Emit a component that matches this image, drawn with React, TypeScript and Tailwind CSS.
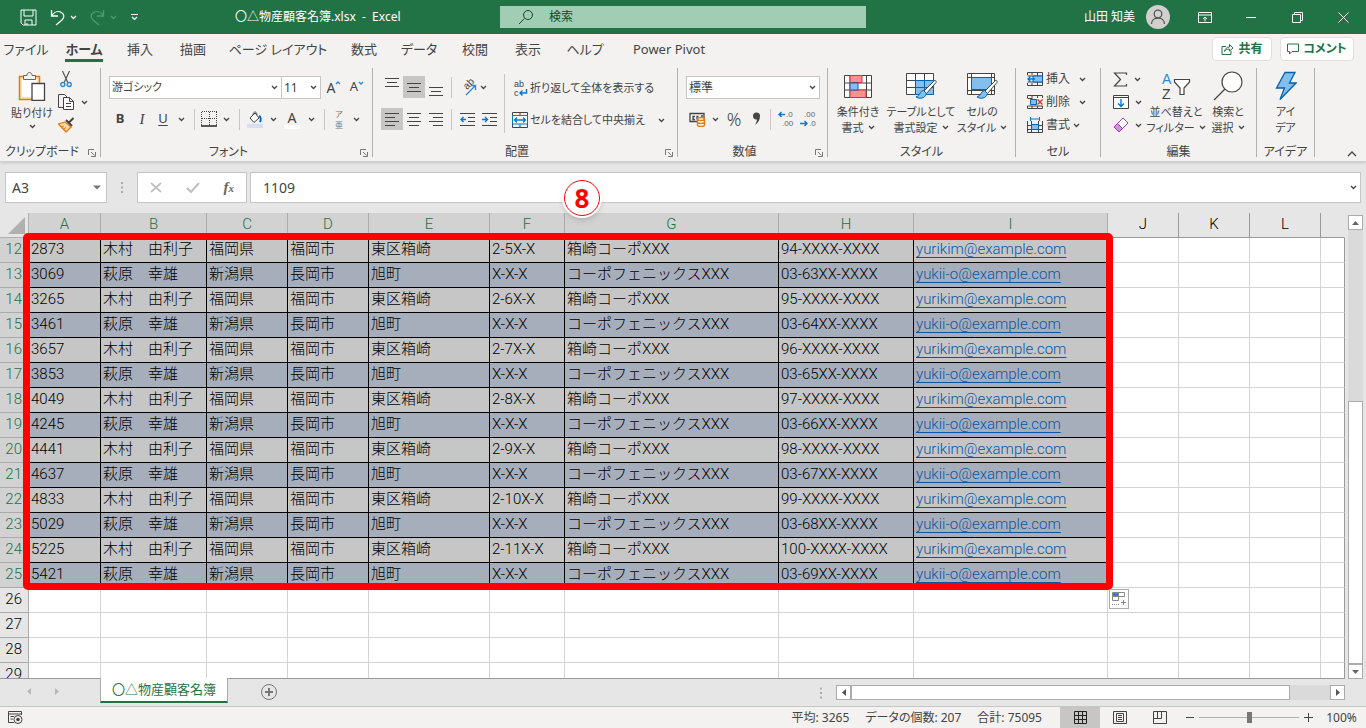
import React from 'react';

import clsx from 'clsx';

// column letters with their widths, the last one takes what is left
const COLUMNS = [
  { name: 'A', width: 'w-[72px]' },
  { name: 'B', width: 'w-[106px]' },
  { name: 'C', width: 'w-[81px]' },
  { name: 'D', width: 'w-[81px]' },
  { name: 'E', width: 'w-[121px]' },
  { name: 'F', width: 'w-[75px]' },
  { name: 'G', width: 'w-[214px]' },
  { name: 'H', width: 'w-[135px]' },
  { name: 'I', width: 'w-[194px]' },
  { name: 'J', width: 'w-[71px]' },
  { name: 'K', width: 'w-[71px]' },
  { name: 'L', width: 'w-[71px]' },
  { name: '', width: '' },
];

const KIMURA = ['木村　由利子', '福岡県', '福岡市', '東区箱崎'];
const OGIWARA = ['萩原　幸雄', '新潟県', '長岡市', '旭町'];

const customers = [
  { row: 12, id: '2873', block: '2-5X-X', tel: '94-XXXX-XXXX' },
  { row: 13, id: '3069', block: 'X-X-X', tel: '03-63XX-XXXX' },
  { row: 14, id: '3265', block: '2-6X-X', tel: '95-XXXX-XXXX' },
  { row: 15, id: '3461', block: 'X-X-X', tel: '03-64XX-XXXX' },
  { row: 16, id: '3657', block: '2-7X-X', tel: '96-XXXX-XXXX' },
  { row: 17, id: '3853', block: 'X-X-X', tel: '03-65XX-XXXX' },
  { row: 18, id: '4049', block: '2-8X-X', tel: '97-XXXX-XXXX' },
  { row: 19, id: '4245', block: 'X-X-X', tel: '03-66XX-XXXX' },
  { row: 20, id: '4441', block: '2-9X-X', tel: '98-XXXX-XXXX' },
  { row: 21, id: '4637', block: 'X-X-X', tel: '03-67XX-XXXX' },
  { row: 22, id: '4833', block: '2-10X-X', tel: '99-XXXX-XXXX' },
  { row: 23, id: '5029', block: 'X-X-X', tel: '03-68XX-XXXX' },
  { row: 24, id: '5225', block: '2-11X-X', tel: '100-XXXX-XXXX' },
  { row: 25, id: '5421', block: 'X-X-X', tel: '03-69XX-XXXX' },
];

const emptyRows = [26, 27, 28, 29];

const TABS = [
  { label: 'ファイル', width: 'w-[52px]' },
  { label: 'ホーム', width: 'w-[64px]' },
  { label: '挿入', width: 'w-[48px]' },
  { label: '描画', width: 'w-[58px]' },
  { label: 'ページ レイアウト', width: 'w-[112px]' },
  { label: '数式', width: 'w-[60px]' },
  { label: 'データ', width: 'w-[50px]' },
  { label: '校閲', width: 'w-[62px]' },
  { label: '表示', width: 'w-[44px]' },
  { label: 'ヘルプ', width: 'w-[70px]' },
  { label: 'Power Pivot', width: 'w-[98px]' },
];

type SvgProps = {
  w: number;
  h: number;
  className?: string;
  children: React.ReactNode;
};

const Svg = ({ w, h, className, children }: SvgProps) => (
  <svg
    width={w}
    height={h}
    viewBox={`0 0 ${w} ${h}`}
    fill="none"
    stroke="currentColor"
    className={clsx('shrink-0', className)}
    aria-hidden="true"
  >
    {children}
  </svg>
);

const Chevron = ({ className }: { className?: string }) => (
  <Svg w={7} h={5} className={className}>
    <path d="M1 1l2.5 2.5L6 1" strokeWidth="1.3" />
  </Svg>
);

const Lines = ({ rows, w = 14, h = 14 }: { rows: number[][]; w?: number; h?: number }) => (
  <Svg w={w} h={h}>
    {rows.map(([x1, x2, y]) => (
      <path key={y} d={`M${x1} ${y + 0.5}H${x2}`} />
    ))}
  </Svg>
);

type ToolProps = {
  label: string;
  width: string;
  active?: boolean;
  className?: string;
  children: React.ReactNode;
};

const Tool = ({ label, width, active, className, children }: ToolProps) => (
  <button
    type="button"
    aria-label={label}
    className={clsx(
      'flex h-[22px] shrink-0 items-center justify-center',
      width,
      active && 'bg-[#c8c6c4]',
      className
    )}
  >
    {children}
  </button>
);

const Divider = ({ className }: { className?: string }) => (
  <div className={clsx('h-[21px] w-px shrink-0 bg-[#c8c6c4]', className)} />
);

type GroupProps = {
  label: string;
  width: string;
  launcher?: boolean;
  children: React.ReactNode;
};

const Group = ({ label, width, launcher, children }: GroupProps) => (
  <section
    aria-label={label}
    className={clsx('flex h-[89px] shrink-0 flex-col border-r border-[#b3b0ad]', width)}
  >
    <div className="flex h-[79px] items-start">{children}</div>
    <div
      className={clsx(
        'relative flex h-[10px] items-center justify-center text-[12px] leading-none whitespace-nowrap',
        launcher && 'pr-4'
      )}
    >
      {label}
      {launcher && (
        <button type="button" aria-label={`${label}の設定`} className="absolute right-1 bottom-0">
          <Svg w={8} h={8} className="text-[#777]">
            <path d="M.5 6V.5H6M3 3l3.5 3.5M7.5 3v4.5H3" />
          </Svg>
        </button>
      )}
    </div>
  </section>
);

type BigButtonProps = {
  lines: [string, string];
  width: string;
  chevron?: boolean;
  children: React.ReactNode;
};

const BigButton = ({ lines, width, chevron = true, children }: BigButtonProps) => (
  <button type="button" className={clsx('flex shrink-0 flex-col items-center', width)}>
    <span className="flex h-9 items-center">{children}</span>
    <span className="text-[11px] leading-[16px] whitespace-nowrap">{lines[0]}</span>
    <span className="flex items-center gap-1 text-[11px] leading-[15px] whitespace-nowrap">
      {lines[1]}
      {chevron && <Chevron />}
    </span>
  </button>
);

const Brush = () => (
  <>
    <path d="M29.5 8.5L19 19l2.5 2.5L31 10.500c.5-1.500-.5-2.500-1.500-2z" fill="#fff" stroke="#444" />
    <path
      d="M18.500 18.500c-4 .5-3 5-7.500 6.500 3 2 9 2 10.500-3.500z"
      fill="#83beec"
      stroke="#0063b1"
    />
  </>
);

function TitleBar() {
  return (
    <header className="flex h-[34px] shrink-0 items-center bg-[#217346] text-[12px] text-white">
      <div className="flex w-[500px] shrink-0 items-center">
        <button type="button" aria-label="上書き保存" className="ml-5">
          <Svg w={17} h={17}>
            <path d="M1 1h15v15H3l-2-2zM4 1v6h9V1M5 16v-5h7v5M7 16v-2" />
          </Svg>
        </button>
        <button type="button" aria-label="元に戻す" className="ml-3 flex items-center gap-1">
          <Svg w={17} h={17}>
            <path d="M2.500 1v6H9M2.500 7C5 3 9 1.500 12.500 3.500c3 2 3 5 .5 7.500l-6 5" strokeWidth="1.300" />
          </Svg>
          <Chevron />
        </button>
        <button
          type="button"
          aria-label="やり直し"
          className="ml-3 flex items-center gap-1 text-[#4f9a70]"
        >
          <Svg w={17} h={17}>
            <path d="M14.500 1v6H8M14.500 7C12 3 8 1.500 4.500 3.500c-3 2-3 5-.5 7.500l6 5" strokeWidth="1.300" />
          </Svg>
          <Chevron />
        </button>
        <button type="button" aria-label="クイック アクセス" className="ml-[13px]">
          <Svg w={9} h={8}>
            <path d="M1 1.500h7M2 4l2.500 2.500L7 4" strokeWidth="1.200" />
          </Svg>
        </button>
        <h1 className="ml-24 whitespace-pre">〇△物産顧客名簿.xlsx  -  Excel</h1>
      </div>
      <label className="flex h-[22px] w-[366px] items-center bg-[#a0cdb4] pl-[18px] text-[#0b5028]">
        <Svg w={16} h={16}>
          <circle cx="10" cy="6" r="4.500" />
          <path d="M6.500 9.500L1 15" />
        </Svg>
        <input
          type="text"
          aria-label="検索"
          placeholder="検索"
          className="ml-[15px] w-full bg-transparent outline-none placeholder:text-[#0b5028]"
        />
      </label>
      <div className="ml-auto flex items-center">
        <span>山田 知美</span>
        <svg width="24" height="24" viewBox="0 0 24 24" fill="none" className="mr-3 ml-[11px]">
          <circle cx="12" cy="12" r="12" fill="#d2d0ce" />
          <circle cx="12" cy="9" r="3.800" stroke="#555" strokeWidth="1.300" />
          <path d="M5.500 19c0-8 13-8 13 0" stroke="#555" strokeWidth="1.300" />
        </svg>
        <button type="button" aria-label="リボンの表示オプション" className="flex w-[46px] justify-center">
          <Svg w={14} h={11}>
            <path d="M.5.5h13v10H.5zM.5 3h13M7 9.500V5M5 7l2-2 2 2" />
          </Svg>
        </button>
        <button type="button" aria-label="最小化" className="flex w-[46px] justify-center">
          <Svg w={10} h={11}>
            <path d="M0 5.500h10" />
          </Svg>
        </button>
        <button type="button" aria-label="元のサイズ" className="flex w-[46px] justify-center">
          <Svg w={11} h={11}>
            <path d="M.5 2.500h8v8h-8zM2.500 2.500v-2h8v8h-2" />
          </Svg>
        </button>
        <button type="button" aria-label="閉じる" className="flex w-[46px] justify-center">
          <Svg w={11} h={11}>
            <path d="M.5.5l10 10M10.500.5l-10 10" />
          </Svg>
        </button>
      </div>
    </header>
  );
}

function TabBar() {
  return (
    <nav className="flex h-[30px] shrink-0 items-center text-[13px]">
      {TABS.map((tab) => (
        <button
          key={tab.label}
          type="button"
          className={clsx('flex h-full justify-center whitespace-nowrap', tab.width)}
        >
          <span
            className={clsx(
              'h-[28px] leading-[30px]',
              tab.label === 'ホーム' && 'border-b-[3px] border-[#217346] font-bold'
            )}
          >
            {tab.label}
          </span>
        </button>
      ))}
      <div className="mr-3 ml-auto flex gap-2 text-[12px] font-bold text-[#217346]">
        <button
          type="button"
          className="flex h-6 w-[60px] items-center justify-center gap-1 rounded-sm border border-[#e1dfdd] bg-white"
        >
          <Svg w={13} h={12}>
            <path d="M5 3.500H1v8h9V8M3.500 8.500c.5-3 2.500-4.500 5-4.500V1.500L12 5 8.500 8V6c-2 0-3.500.5-5 2.500z" />
          </Svg>
          共有
        </button>
        <button
          type="button"
          className="flex h-6 w-[74px] items-center justify-center gap-1 rounded-sm border border-[#e1dfdd] bg-white"
        >
          <Svg w={12} h={12}>
            <path d="M.5 1h11v7.500H5L2.500 11V8.500h-2z" />
          </Svg>
          コメント
        </button>
      </div>
    </nav>
  );
}

function ClipboardGroup() {
  return (
    <Group label="クリップボード" width="w-[101px]" launcher>
      <button type="button" className="ml-2 flex w-12 flex-col items-center pt-[3px] text-[11px]">
        <Svg w={28} h={30}>
          <path d="M1.500 5.500h20v23h-20z" fill="#fde2a8" stroke="#e07b10" strokeWidth="1.500" />
          <path d="M4 8h15v18H4z" fill="#fff" stroke="none" />
          <path d="M5.500 8.500v-4h3.500c0-4 5-4 5 0h3.500v4z" fill="#f3f2f1" stroke="#666" />
          <path d="M14 12.500h12.500v17H14z" fill="#fff" stroke="#444" strokeWidth="1.300" />
        </Svg>
        <span className="mt-1 leading-[15px] whitespace-nowrap">貼り付け</span>
        <Chevron className="mt-1" />
      </button>
      <div className="ml-[2px] flex flex-col gap-px">
        <Tool label="切り取り" width="w-4">
          <Svg w={12} h={17}>
            <path d="M2.500 0l5.500 12M9.500 0L4 12" stroke="#555" strokeWidth="1.200" />
            <circle cx="2.800" cy="13.500" r="2" stroke="#2b88d8" strokeWidth="1.400" />
            <circle cx="9.200" cy="13.500" r="2" stroke="#2b88d8" strokeWidth="1.400" />
          </Svg>
        </Tool>
        <Tool label="コピー" width="w-[30px]" className="gap-[6px]">
          <Svg w={17} h={17}>
            <path d="M5.500 13.500h-5V.5h6l3 3" />
            <path d="M5.500 3.500h6l4 4v8h-10zM11.500 3.500v4h4M8 9.500h5M8 12.500h5" fill="#fff" />
          </Svg>
          <Chevron />
        </Tool>
        <Tool label="書式のコピー" width="w-4">
          <Svg w={17} h={16}>
            <path d="M15.500 1l-4.500 4.500M8 3l6 6" strokeWidth="2" />
            <path d="M7 5L.5 7 8 15l5-5z" fill="#fbd9a8" stroke="#e07b10" strokeWidth="1.300" />
            <path d="M3 10l3-1M5 12.500l3-2" stroke="#e07b10" />
          </Svg>
        </Tool>
      </div>
    </Group>
  );
}

function FontGroup() {
  return (
    <Group label="フォント" width="w-[272px]" launcher>
      <div className="pl-2">
        <div className="flex pt-2">
          <div className="relative flex items-center">
            <select
              aria-label="フォント名"
              className="h-[23px] w-[173px] appearance-none border border-[#c8c6c4] bg-white pl-[2px] text-[11px]"
            >
              <option>游ゴシック</option>
            </select>
            <Chevron className="pointer-events-none absolute right-1" />
          </div>
          <div className="relative -ml-px flex items-center">
            <select
              aria-label="フォント サイズ"
              className="h-[23px] w-[40px] appearance-none border border-[#c8c6c4] bg-white pl-[2px] text-[12px]"
            >
              <option>11</option>
            </select>
            <Chevron className="pointer-events-none absolute right-1" />
          </div>
          <Tool label="フォント サイズの拡大" width="w-[26px]">
            <span className="text-[14px]">A</span>
            <Svg w={6} h={14} className="text-[#2b88d8]">
              <path d="M1 4l2-2 2 2" strokeWidth="1.300" />
            </Svg>
          </Tool>
          <Tool label="フォント サイズの縮小" width="w-[20px]">
            <span className="text-[13px]">A</span>
            <Svg w={6} h={14} className="text-[#2b88d8]">
              <path d="M1 2l2 2 2-2" strokeWidth="1.300" />
            </Svg>
          </Tool>
        </div>
        <div className="flex items-center pt-[9px]">
          <Tool label="太字" width="w-[22px]">
            <span className="text-[13px] font-bold">B</span>
          </Tool>
          <Tool label="斜体" width="w-[22px]">
            <span className="font-['Liberation_Serif',serif] text-[15px] italic">I</span>
          </Tool>
          <Tool label="下線" width="w-[20px]">
            <span className="text-[13px] underline underline-offset-2">U</span>
          </Tool>
          <Tool label="下線の種類" width="w-4">
            <Chevron />
          </Tool>
          <Divider className="mx-[5px]" />
          <Tool label="罫線" width="w-[18px]">
            <Svg w={16} h={16}>
              <path d="M1 .5h15M.5 1v14M15.500 1v14M8.500 1v14M1 7.500h15" strokeDasharray="1 1" />
              <path d="M0 15h16" stroke="#222" strokeWidth="1.500" />
            </Svg>
          </Tool>
          <Tool label="罫線の種類" width="w-4">
            <Chevron />
          </Tool>
          <Divider className="mx-[5px]" />
          <Tool label="塗りつぶしの色" width="w-[20px]">
            <Svg w={16} h={17}>
              <path d="M3 7l5-5 4 5-5 4.500zM6 4c0-4 4-4 4 0" fill="#fff" />
              <path d="M12 5c2 1 2 4 1 6" stroke="#0063b1" strokeWidth="2" />
              <path d="M0 15h16" stroke="#d6dff0" strokeWidth="4" />
            </Svg>
          </Tool>
          <Tool label="塗りつぶしの色を選ぶ" width="w-4">
            <Chevron />
          </Tool>
          <Tool label="フォントの色" width="w-[22px]">
            <span className="border-b-4 border-white px-1 text-[14px] leading-[15px]">A</span>
          </Tool>
          <Tool label="フォントの色を選ぶ" width="w-4">
            <Chevron />
          </Tool>
          <Divider className="mx-[5px]" />
          <Tool label="ふりがな" width="w-[18px]" className="flex-col text-[#777]">
            <span className="text-[8px] leading-[11px]">ア</span>
            <span className="text-[8px] leading-[11px]">亜</span>
          </Tool>
          <Tool label="ふりがなの設定" width="w-4">
            <Chevron />
          </Tool>
        </div>
      </div>
    </Group>
  );
}

function AlignmentGroup() {
  return (
    <Group label="配置" width="w-[305px]" launcher>
      <div className="pl-2">
        <div className="flex items-center pt-2">
          <Tool label="上揃え" width="w-[22px]">
            <Lines rows={[[0, 14, 0], [2, 12, 4], [0, 14, 8]]} h={18} />
          </Tool>
          <Tool label="上下中央揃え" width="w-[22px]" active>
            <Lines rows={[[0, 14, 3], [2, 12, 7], [0, 14, 11]]} />
          </Tool>
          <Tool label="下揃え" width="w-[22px]">
            <Lines rows={[[0, 14, 9], [2, 12, 13], [0, 14, 17]]} h={18} />
          </Tool>
          <Divider className="mx-1" />
          <Tool label="方向" width="w-[32px]" className="gap-[2px]">
            <Svg w={20} h={20} className="font-['Liberation_Sans',sans-serif]">
              <text fontSize="10" fill="currentColor" stroke="none" transform="translate(9 13) rotate(-45)">
                ab
              </text>
              <path d="M8 18L17 9M13 8.500h4.500V13" stroke="#2b88d8" strokeWidth="1.300" />
            </Svg>
            <Chevron />
          </Tool>
        </div>
        <div className="flex items-center pt-[10px]">
          <Tool label="左揃え" width="w-[22px]" active>
            <Lines rows={[[0, 14, 1], [0, 10, 5], [0, 14, 9], [0, 10, 13]]} />
          </Tool>
          <Tool label="中央揃え" width="w-[22px]">
            <Lines rows={[[0, 14, 1], [2, 12, 5], [0, 14, 9], [2, 12, 13]]} />
          </Tool>
          <Tool label="右揃え" width="w-[22px]">
            <Lines rows={[[0, 14, 1], [4, 14, 5], [0, 14, 9], [4, 14, 13]]} />
          </Tool>
          <Divider className="mx-1" />
          <Tool label="インデントを減らす" width="w-[22px]">
            <Svg w={15} h={14}>
              <path d="M0 1.500h15M8 5.500h7M8 9.500h7M0 13.500h15" />
              <path d="M6 7.500H1M3.500 5L1 7.500 3.500 10" stroke="#0078d4" strokeWidth="1.400" />
            </Svg>
          </Tool>
          <Tool label="インデントを増やす" width="w-[22px]">
            <Svg w={15} h={14}>
              <path d="M0 1.500h15M8 5.500h7M8 9.500h7M0 13.500h15" />
              <path d="M0 7.500h5.500M3 5l2.500 2.500L3 10" stroke="#0078d4" strokeWidth="1.400" />
            </Svg>
          </Tool>
        </div>
      </div>
      <div className="mt-[6px] ml-1 h-[59px] w-px bg-[#c8c6c4]" />
      <div className="pl-[7px] text-[11px]">
        <button type="button" className="mt-[9px] flex h-[22px] items-center gap-[2px] whitespace-nowrap">
          <Svg w={16} h={20} className="font-['Liberation_Sans',sans-serif]">
            <text x="2" y="9" fontSize="9" fill="currentColor" stroke="none">
              ab
            </text>
            <text x="2" y="18" fontSize="9" fill="currentColor" stroke="none">
              c
            </text>
            <path d="M14.500 11v4H8M10.500 12.500L8 15l2.500 2.500" stroke="#0078d4" strokeWidth="1.400" />
          </Svg>
          折り返して全体を表示する
        </button>
        <div className="mt-[10px] flex h-[22px] w-[153px] items-center justify-between">
          <button type="button" className="flex items-center gap-[2px] whitespace-nowrap">
            <Svg w={16} h={16}>
              <path d="M.5.5h15v15H.5zM8 .5v3M8 12v3.500" />
              <path d="M.5 3.500h15v8.500H.5z" fill="#fff" stroke="#0078d4" />
              <path d="M2.500 8h11M5 5.500L2.500 8 5 10.500M11 5.500L13.500 8 11 10.500" stroke="#0078d4" strokeWidth="1.300" />
            </Svg>
            セルを結合して中央揃え
          </button>
          <button type="button" aria-label="結合の種類">
            <Chevron />
          </button>
        </div>
      </div>
    </Group>
  );
}

function NumberGroup() {
  return (
    <Group label="数値" width="w-[150px]" launcher>
      <div className="pl-2">
        <div className="relative flex w-[134px] items-center pt-2">
          <select
            aria-label="表示形式"
            className="h-[23px] w-full appearance-none border border-[#c8c6c4] bg-white pl-[2px] text-[12px]"
          >
            <option>標準</option>
          </select>
          <Chevron className="pointer-events-none absolute right-1" />
        </div>
        <div className="flex items-center pt-[9px]">
          <Tool label="通貨表示形式" width="w-[36px]" className="gap-[6px]">
            <Svg w={17} h={16}>
              <path d="M1 2.500h14v8H1zM6 5.500H4v3h2M9.500 5.500H8v3M12 5h2" strokeWidth="1.300" />
              <path
                d="M8.500 8v6c0 2 7 2 7 0V8c0-2-7-2-7 0c0 2 7 2 7 0M8.500 11c0 2 7 2 7 0"
                fill="#fff"
                stroke="#e07b10"
                strokeWidth="1.400"
              />
            </Svg>
            <Chevron />
          </Tool>
          <Tool label="パーセント" width="w-[24px]">
            <span className="text-[18px] leading-none font-light">%</span>
          </Tool>
          <Tool label="桁区切り" width="w-[20px]">
            <Svg w={9} h={14}>
              <path d="M1 4a3.500 3.500 0 0 1 7 0c0 4-2 7-5 9 1-2 2-4 2-5.500C3 8 1 6.500 1 4z" fill="currentColor" stroke="none" />
            </Svg>
          </Tool>
          <Divider className="mr-[5px] ml-1" />
          <Tool label="小数点以下の表示桁数を増やす" width="w-[22px]">
            <Svg w={18} h={20} className="font-['Liberation_Sans',sans-serif]">
              <path d="M7 5.500H1M3.500 3L1 5.500 3.500 8" stroke="#0078d4" strokeWidth="1.400" />
              <text x="8" y="8" fontSize="8" fill="#666" stroke="none">
                .0
              </text>
              <text x="4" y="17" fontSize="8" fill="#666" stroke="none">
                .00
              </text>
            </Svg>
          </Tool>
          <Tool label="小数点以下の表示桁数を減らす" width="w-[22px]">
            <Svg w={18} h={20} className="font-['Liberation_Sans',sans-serif]">
              <text x="4" y="8" fontSize="8" fill="#666" stroke="none">
                .00
              </text>
              <path d="M0 14.500h7M4.500 12L7 14.500 4.500 17" stroke="#0078d4" strokeWidth="1.400" />
              <text x="9" y="17" fontSize="8" fill="#666" stroke="none">
                .0
              </text>
            </Svg>
          </Tool>
        </div>
      </div>
    </Group>
  );
}

function StylesGroup() {
  return (
    <Group label="スタイル" width="w-[188px]">
      <BigButton lines={['条件付き', '書式']} width="w-[60px]">
        <Svg w={28} h={23}>
          <path d="M.5.5h27v22H.5zM.5 8h27M.5 15h27M6 .5v22M22.500 .5v22" fill="#fff" />
          <path d="M6 .5h12v7H6zM6 15h16v7.500H6z" fill="#ff9090" stroke="#d13438" />
          <path d="M6 8h8v7H6z" fill="#83beec" stroke="#0063b1" />
        </Svg>
      </BigButton>
      <BigButton lines={['テーブルとして', '書式設定']} width="w-[66px]">
        <Svg w={32} h={28}>
          <path d="M1.500 1.500h27v21h-27zM1.500 8.500h27M1.500 15.500h27M10.500 1.500v21M19.500 1.500v21" fill="#fff" />
          <path d="M10.500 8.500h18v14h-18z" fill="#83beec" stroke="#0063b1" />
          <path d="M10.500 15.500h18M19.500 8.500v14" stroke="#0063b1" />
          <Brush />
        </Svg>
      </BigButton>
      <BigButton lines={['セルの', 'スタイル']} width="w-[56px]">
        <Svg w={32} h={28}>
          <path d="M1.500 1.500h27v21h-27zM1.500 5.500h27M1.500 18.500h27M5.500 1.500v21M25.500 1.500v21" fill="#fff" />
          <path d="M5.500 5.500h20v12h-20z" fill="#83beec" stroke="#0063b1" />
          <Brush />
        </Svg>
      </BigButton>
    </Group>
  );
}

function CellsGroup() {
  return (
    <Group label="セル" width="w-[85px]">
      <div className="flex flex-col gap-px pl-[11px] text-[12px]">
        <button type="button" className="flex h-[22px] items-center gap-[3px]">
          <Svg w={16} h={15}>
            <path d="M.5 3V.5h15v13H.5V11M.5 4h15M.5 10h15M5 .5V3M10.500 .5v13M5 11v2.500" />
            <path d="M6 4h9.500v6H6z" fill="#83beec" stroke="#0063b1" />
            <path d="M8 7H1M3.500 4.500L1 7l2.500 2.500" stroke="#0078d4" strokeWidth="1.400" />
          </Svg>
          挿入
          <Chevron className="ml-[6px]" />
        </button>
        <button type="button" className="flex h-[22px] items-center gap-[3px]">
          <Svg w={16} h={15}>
            <path d="M.5 3V.5h15V3M.5 3.500H5M.5 11h15v2.500H.5V11M5 .5V4M10.500 .5V3M5 11v2.500M10.500 11v2.500" />
            <path d="M3.500 4.500h6v5h-6z" fill="#83beec" stroke="#0063b1" />
            <path d="M10.500 4.500l5 5M15.500 4.500l-5 5" stroke="#e03c31" strokeWidth="1.500" />
          </Svg>
          削除
          <Chevron className="ml-[6px]" />
        </button>
        <button type="button" className="flex h-[22px] items-center gap-[3px]">
          <Svg w={16} h={17}>
            <path d="M.5 4v11.500h15V4M.5 8.500h15M.5 12.500h15M4.500 4v11.500M11.500 4v11.500" />
            <path d="M4.500 7.500h7v5h-7z" fill="#83beec" stroke="#0063b1" />
            <path d="M3.500 0v4M12.500 0v4M3.500 2h9" stroke="#0078d4" />
          </Svg>
          書式
          <Chevron />
        </button>
      </div>
    </Group>
  );
}

function EditingGroup() {
  return (
    <Group label="編集" width="w-[156px]">
      <div className="flex flex-col gap-px pl-[11px]">
        <Tool label="オート SUM" width="w-[30px]" className="gap-[6px]">
          <Svg w={15} h={15}>
            <path d="M13.500 3V1H1.500l6 6.500-6 6.500h12v-2" strokeWidth="1.200" />
          </Svg>
          <Chevron />
        </Tool>
        <Tool label="フィル" width="w-[30px]" className="gap-[6px]">
          <Svg w={16} h={14}>
            <path d="M.5.5h15v13H.5zM.5 2.500h15" fill="#fff" />
            <path d="M8 4v7.500M5 8.500l3 3 3-3" stroke="#0078d4" strokeWidth="1.400" />
          </Svg>
          <Chevron />
        </Tool>
        <Tool label="クリア" width="w-[30px]" className="gap-[6px]">
          <Svg w={16} h={16}>
            <path d="M10 1l5 5-9 9-5-5z" fill="#fff" stroke="#9a3fa8" />
            <path d="M4.500 6.500l5 5L6 15l-5-5z" fill="#d58fe0" stroke="#9a3fa8" />
          </Svg>
          <Chevron />
        </Tool>
      </div>
      <BigButton lines={['並べ替えと', 'フィルター']} width="w-[68px]">
        <Svg w={30} h={32} className="font-['Liberation_Sans',sans-serif]">
          <text x="1" y="14" fontSize="14" fill="#2b88d8" stroke="none">
            A
          </text>
          <text x="1" y="29" fontSize="14" fill="currentColor" stroke="none">
            Z
          </text>
          <path d="M13.500 9.500h15V12l-5.500 6v6.500h-4V18L13.500 12z" fill="#fff" strokeWidth="1.200" />
        </Svg>
      </BigButton>
      <BigButton lines={['検索と', '選択']} width="w-[36px]">
        <Svg w={30} h={30}>
          <circle cx="19" cy="11" r="10" fill="#fff" strokeWidth="1.200" />
          <path d="M12 18L1 29" strokeWidth="1.200" />
        </Svg>
      </BigButton>
    </Group>
  );
}

function IdeasGroup() {
  return (
    <Group label="アイデア" width="w-[58px]">
      <BigButton lines={['アイ', 'デア']} width="w-[57px]" chevron={false}>
        <Svg w={22} h={30}>
          <path
            d="M10 1.500h10L14.500 12H21L5 28.500 9.500 17H1.500z"
            fill="#83beec"
            stroke="#0063b1"
            strokeWidth="1.300"
          />
        </Svg>
      </BigButton>
    </Group>
  );
}

function FormulaBar() {
  return (
    <div className="flex h-[48px] shrink-0 items-start pt-[7px] pr-[5px] pl-[5px]">
      <div className="relative flex items-center">
        <input
          aria-label="名前ボックス"
          defaultValue="A3"
          className="h-[31px] w-[102px] border border-[#c6c6c6] bg-white pl-[6px] text-[14px] text-[#444]"
        />
        <Svg w={8} h={5} className="pointer-events-none absolute right-[6px]">
          <path d="M0 .5h8L4 4.500z" fill="#777" stroke="none" />
        </Svg>
      </div>
      <Svg w={30} h={31}>
        <path d="M15 10v11" stroke="#aaa" strokeWidth="2" strokeDasharray="2 2.500" />
      </Svg>
      <div className="flex h-[31px] w-[110px] items-center justify-around border border-[#c6c6c6] bg-white">
        <button type="button" aria-label="キャンセル">
          <Svg w={12} h={11} className="text-[#c0c0c0]">
            <path d="M1 1l10 9M11 1L1 10" strokeWidth="1.700" />
          </Svg>
        </button>
        <button type="button" aria-label="入力">
          <Svg w={14} h={11} className="text-[#c0c0c0]">
            <path d="M1 6l4 4 8-9" strokeWidth="2" />
          </Svg>
        </button>
        <button
          type="button"
          aria-label="関数の挿入"
          className="font-['Liberation_Serif',serif] text-[15px] leading-none font-bold text-[#666] italic"
        >
          f<span className="text-[11px]">x</span>
        </button>
      </div>
      <div className="relative ml-[3px] flex flex-1 items-center">
        <input
          aria-label="数式バー"
          defaultValue="1109"
          className="h-[31px] w-full border border-[#c6c6c6] bg-white pl-3 text-[14px] text-[#444]"
        />
        <Chevron className="absolute right-1" />
      </div>
    </div>
  );
}

const rowHeaderBase = 'border-r border-b p-0 pr-[6px] pb-[2px] text-right align-middle font-light';

function Sheet() {
  return (
    <table className="w-full table-fixed border-separate border-spacing-0 font-[Roboto,'Noto_Sans_CJK_JP',sans-serif] text-[15px] leading-[20px] font-light whitespace-nowrap text-black [font-feature-settings:normal]">
      <colgroup>
        <col className="w-[29px]" />
        {COLUMNS.map((col) => (
          <col key={col.name} className={col.width} />
        ))}
      </colgroup>
      <thead>
        <tr className="h-[25px]">
          <th className="border-r border-b border-[#b0b0b0] bg-[#e6e6e6] p-0">
            <Svg w={28} h={24}>
              <path d="M25 4v17H8z" fill="#b0b0b0" stroke="none" />
            </Svg>
          </th>
          {COLUMNS.map((col, i) => (
            <th
              key={col.name}
              className={clsx(
                'border-r border-b p-0 pb-[2px] font-light',
                i < 9
                  ? 'border-[#ababab] bg-[#d2d2d2] text-[#217346]'
                  : 'border-[#999] bg-[#e6e6e6]',
                col.name === '' && 'border-r-[#e6e6e6]'
              )}
            >
              {col.name}
            </th>
          ))}
        </tr>
      </thead>
      <tbody>
        {customers.map((customer, i) => {
          const odd = i % 2 === 1;
          const cells = [customer.id, ...(odd ? OGIWARA : KIMURA), customer.block];
          cells.push(odd ? 'コーポフェニックスXXX' : '箱崎コーポXXX', customer.tel);
          const mail = odd ? 'yukii-o@example.com' : 'yurikim@example.com';
          return (
            <tr key={customer.row} className="h-[25px]">
              <th className={clsx(rowHeaderBase, 'border-[#ababab] bg-[#d2d2d2] text-[#217346]')}>
                {customer.row}
              </th>
              {cells.map((cell, j) => (
                <td
                  key={j}
                  className={clsx(
                    'border-r border-b border-black p-0 pb-[2px] pl-[2px]',
                    odd ? 'bg-[#a6aebc]' : 'bg-[#c6c6c6]'
                  )}
                >
                  {cell}
                </td>
              ))}
              <td
                className={clsx(
                  'border-r border-b border-black p-0 pb-[2px] pl-[2px]',
                  odd ? 'bg-[#a6aebc]' : 'bg-[#c6c6c6]'
                )}
              >
                <a href={`mailto:${mail}`} className="text-[#0b55a5] underline underline-offset-3">
                  {mail}
                </a>
              </td>
              {[0, 1, 2, 3].map((k) => (
                <td key={k} className="border-r border-b border-[#d4d4d4] bg-white p-0 last:border-r-[#999]" />
              ))}
            </tr>
          );
        })}
        {emptyRows.map((row) => (
          <tr key={row} className="h-[25px]">
            <th className={clsx(rowHeaderBase, 'border-[#ababab] bg-[#e6e6e6]')}>{row}</th>
            {COLUMNS.map((col) => (
              <td key={col.name} className="border-r border-b border-[#d4d4d4] bg-white p-0 last:border-r-[#999]" />
            ))}
          </tr>
        ))}
      </tbody>
    </table>
  );
}

function VerticalScrollbar() {
  return (
    <div className="flex w-[15px] shrink-0 flex-col pt-[2px]">
      <button type="button" aria-label="上へ" className="flex h-[15px] items-center justify-center border border-[#ababab] bg-white">
        <Svg w={7} h={4}>
          <path d="M0 4h7L3.500 0z" fill="#666" stroke="none" />
        </Svg>
      </button>
      <div className="flex min-h-0 flex-1 flex-col bg-[#dadada]">
        <div className="h-[171px] shrink" />
        <div className="min-h-4 flex-1 border border-[#ababab] bg-white" />
      </div>
      <button type="button" aria-label="下へ" className="flex h-[15px] items-center justify-center border border-[#ababab] bg-white">
        <Svg w={7} h={4}>
          <path d="M0 0h7L3.500 4z" fill="#666" stroke="none" />
        </Svg>
      </button>
    </div>
  );
}

function SheetTabs() {
  return (
    <div className="flex h-[28px] shrink-0 items-start border-b border-[#c6c6c6]">
      <div className="flex h-[25px] w-[100px] items-center gap-6 pl-[26px] text-[#b8b8b8]">
        <button type="button" aria-label="前のシート">
          <Svg w={5} h={7}>
            <path d="M5 0v7L1 3.500z" fill="currentColor" stroke="none" />
          </Svg>
        </button>
        <button type="button" aria-label="次のシート">
          <Svg w={5} h={7}>
            <path d="M0 0v7l4-3.500z" fill="currentColor" stroke="none" />
          </Svg>
        </button>
      </div>
      <button
        type="button"
        className="z-10 -mt-px flex h-[25px] w-[128px] items-center justify-center border-r border-b-2 border-l border-[#ababab] border-b-[#217346] bg-white text-[13px] text-[#217346]"
      >
        〇△物産顧客名簿
      </button>
      <button type="button" aria-label="新しいシート" className="mt-[5px] ml-[33px] text-[#777]">
        <Svg w={16} h={16}>
          <circle cx="8" cy="8" r="7.500" />
          <path d="M8 4v8M4 8h8" strokeWidth="2" />
        </Svg>
      </button>
      <div className="mt-[6px] mr-[21px] ml-auto flex h-[15px] w-[527px]">
        <Svg w={18} h={15}>
          <path d="M3 2.500v11" stroke="#aaa" strokeWidth="2" strokeDasharray="2 2.500" />
        </Svg>
        <button type="button" aria-label="左へ" className="flex w-[15px] items-center justify-center border border-[#ababab] bg-white">
          <Svg w={4} h={7}>
            <path d="M4 0v7L0 3.500z" fill="#555" stroke="none" />
          </Svg>
        </button>
        <div className="flex flex-1 bg-[#dadada]">
          <div className="w-[439px] border border-[#ababab] bg-white" />
        </div>
        <button type="button" aria-label="右へ" className="flex w-[15px] items-center justify-center border border-[#ababab] bg-white">
          <Svg w={4} h={7}>
            <path d="M0 0v7l4-3.500z" fill="#555" stroke="none" />
          </Svg>
        </button>
      </div>
    </div>
  );
}

function StatusBar() {
  return (
    <footer className="flex h-[21px] shrink-0 items-center bg-[#f3f2f1] text-[12px]">
      <button type="button" aria-label="マクロの記録" className="ml-2">
        <Svg w={15} h={13}>
          <path d="M6 11.500H.5V.5h13V4M.5 3h13M2.500 5.500H6M2.500 8H5" />
          <circle cx="10" cy="8.500" r="4" fill="#f3f2f1" />
          <circle cx="10" cy="8.500" r="1.800" fill="currentColor" stroke="none" />
        </Svg>
      </button>
      <div className="ml-auto flex items-center gap-4 whitespace-nowrap">
        <span>平均: 3265</span>
        <span>データの個数: 207</span>
        <span>合計: 75095</span>
      </div>
      <div className="ml-[18px] flex h-full">
        <button type="button" aria-label="標準" className="flex w-[40px] items-center justify-center bg-[#c8c6c4]">
          <Svg w={13} h={13}>
            <path d="M.5.5h12v12H.5zM.5 4.500h12M.5 8.500h12M4.500.5v12M8.500.5v12" stroke="#222" />
          </Svg>
        </button>
        <button type="button" aria-label="ページ レイアウト" className="flex w-[40px] items-center justify-center">
          <Svg w={14} h={13}>
            <path d="M.5.5h13v12H.5zM3.500 2.500h7v8h-7zM5 4.500h4M5 6.500h4M5 8.500h4" />
          </Svg>
        </button>
        <button type="button" aria-label="改ページ プレビュー" className="flex w-[40px] items-center justify-center">
          <Svg w={14} h={13}>
            <path d="M.5.5h13v12H.5zM4.500.5v7M8.500.5v7M.5 7.500h8" />
          </Svg>
        </button>
      </div>
      <button type="button" aria-label="縮小" className="ml-[6px]">
        <Svg w={8} h={9}>
          <path d="M0 4.500h8" />
        </Svg>
      </button>
      <input
        type="range"
        aria-label="ズーム"
        defaultValue={50}
        className="mx-[5px] h-[11px] w-[100px] appearance-none bg-[linear-gradient(#b0b0b0,#b0b0b0)] bg-[length:100%_1px] bg-center bg-no-repeat [&::-webkit-slider-thumb]:h-[11px] [&::-webkit-slider-thumb]:w-[5px] [&::-webkit-slider-thumb]:appearance-none [&::-webkit-slider-thumb]:bg-[#777]"
      />
      <button type="button" aria-label="拡大">
        <Svg w={9} h={9}>
          <path d="M0 4.500h9M4.500 0v9" />
        </Svg>
      </button>
      <span className="mr-2 ml-3 w-[33px] text-center">100%</span>
    </footer>
  );
}

export default function App() {
  return (
    <div className="flex h-screen flex-col overflow-hidden bg-[#e6e6e6] font-['Noto_Sans','Noto_Sans_CJK_JP',sans-serif] text-[#444] [font-feature-settings:'palt']">
      <TitleBar />
      <div className="flex shrink-0 flex-col border-b border-[#d0d0d0] bg-[#f3f2f1] shadow-sm">
        <TabBar />
        <div className="flex h-[97px] pt-1">
          <ClipboardGroup />
          <FontGroup />
          <AlignmentGroup />
          <NumberGroup />
          <StylesGroup />
          <CellsGroup />
          <EditingGroup />
          <IdeasGroup />
          <button type="button" aria-label="リボンを折りたたむ" className="mr-[9px] mb-1 ml-auto self-end">
            <Svg w={10} h={6}>
              <path d="M1 5l4-4 4 4" strokeWidth="1.300" />
            </Svg>
          </button>
        </div>
      </div>
      <div className="mt-[3px]">
        <FormulaBar />
      </div>
      <main className="relative flex min-h-0 flex-1">
        <div className="min-w-0 flex-1 overflow-hidden border-b border-[#999]">
          <Sheet />
        </div>
        <div className="mx-[3px] flex">
          <VerticalScrollbar />
        </div>
        <div className="pointer-events-none absolute top-[20px] left-[23px] h-[357px] w-[1090px] rounded-[5px] border-[7px] border-[#ff0000]" />
        <div className="absolute top-[-35px] left-[562px] flex size-10 items-center justify-center rounded-full bg-white shadow-md">
          <div className="flex size-9 items-center justify-center rounded-full border border-[#ff0000] text-[26px] leading-none font-bold text-[#ff0000]">
            8
          </div>
        </div>
        <button
          type="button"
          aria-label="オートフィル オプション"
          className="absolute top-[376px] left-[1109px] flex size-5 items-center justify-center border border-[#ababab] bg-white"
        >
          <Svg w={14} h={14} className="text-[#888]">
            <path d="M.5.5h12v4H.5zM.5 4.500h6v4h-6zM6.500.5v4" />
            <path d="M1 1h5v3H1z" fill="#3b78e7" stroke="none" />
            <path d="M0 12.500h7" strokeDasharray="1 1" />
            <path d="M9 10.500h5M11.500 8v5" />
          </Svg>
        </button>
      </main>
      <SheetTabs />
      <StatusBar />
    </div>
  );
}
